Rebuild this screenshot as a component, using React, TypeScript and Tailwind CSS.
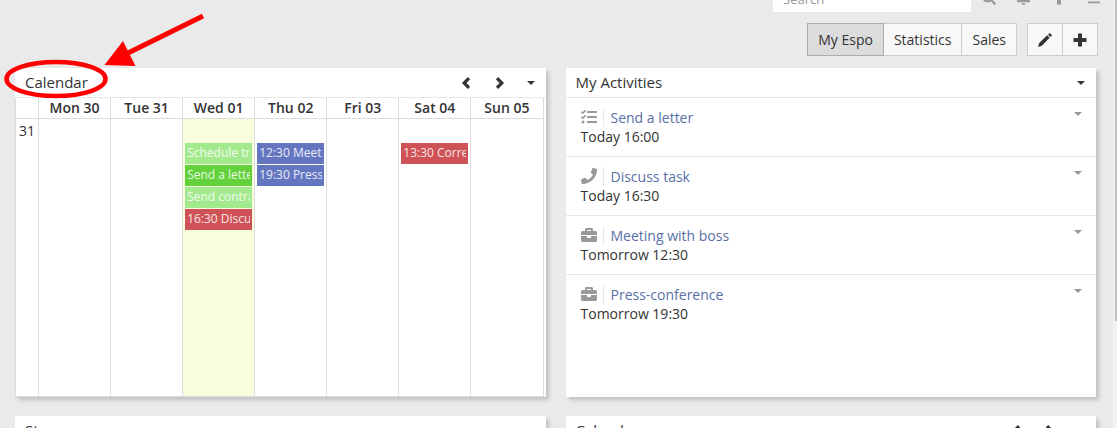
import React from 'react';
import { FaBell, FaBars, FaBriefcase, FaPhone, FaSearch, FaTasks } from 'react-icons/fa';
import type { IconType } from 'react-icons';

type CalendarEvent = { title: string; color: string };
type Day = { label: string; today?: boolean; events: CalendarEvent[] };
type Activity = { icon: IconType; name: string; date: string };

const days: Day[] = [
  { label: 'Mon 30', events: [] },
  { label: 'Tue 31', events: [] },
  {
    label: 'Wed 01',
    today: true,
    events: [
      { title: 'Schedule training', color: 'bg-[#a3e98d]' },
      { title: 'Send a letter', color: 'bg-[#63d13c]' },
      { title: 'Send contract', color: 'bg-[#a3e98d]' },
      { title: '16:30 Discuss task', color: 'bg-[#cf5257]' },
    ],
  },
  {
    label: 'Thu 02',
    events: [
      { title: '12:30 Meeting with boss', color: 'bg-[#6576c1]' },
      { title: '19:30 Press-conference', color: 'bg-[#6576c1]' },
    ],
  },
  { label: 'Fri 03', events: [] },
  { label: 'Sat 04', events: [{ title: '13:30 Correspondence', color: 'bg-[#cf5257]' }] },
  { label: 'Sun 05', events: [] },
];

const activities: Activity[] = [
  { icon: FaTasks, name: 'Send a letter', date: 'Today 16:00' },
  { icon: FaPhone, name: 'Discuss task', date: 'Today 16:30' },
  { icon: FaBriefcase, name: 'Meeting with boss', date: 'Tomorrow 12:30' },
  { icon: FaBriefcase, name: 'Press-conference', date: 'Tomorrow 19:30' },
];

function Caret() {
  return (
    <svg width="8" height="4" viewBox="0 0 8 4" fill="currentColor" aria-hidden="true">
      <path d="M0 0h8L4 4z" />
    </svg>
  );
}

function Chevron({ next = false }: { next?: boolean }) {
  return (
    <svg width="10" height="12" viewBox="0 0 10 12" fill="none" stroke="currentColor" strokeWidth="3.2" aria-hidden="true">
      <path d={next ? 'M2 1.2L6.8 6L2 10.8' : 'M8 1.2L3.2 6L8 10.8'} />
    </svg>
  );
}

function Plus() {
  return (
    <svg width="14" height="14" viewBox="0 0 14 14" fill="currentColor" aria-hidden="true">
      <path d="M5 .5h4V5h4.500v4H9v4.500H5V9H.5V5H5z" />
    </svg>
  );
}

function Pencil() {
  return (
    <svg width="14" height="14" viewBox="0 0 14 14" fill="currentColor" aria-hidden="true">
      <path d="M0 14l1.200-3.900L9.200 2.300l2.400 2.400L3.900 12.800zM10 1.500l1-1q.6-.6 1.200 0l1.300 1.300q.6.600 0 1.200l-1.100 1z" />
    </svg>
  );
}

function Panel({ title, pager = false, children }: { title: string; pager?: boolean; children?: React.ReactNode }) {
  return (
    <section className="flex min-w-0 flex-col bg-white shadow-[3px_3px_4px_rgba(0,0,0,0.18)]">
      <header className="flex h-[30px] shrink-0 items-center border-b border-[#e8e8e8] pr-[11px] pl-[10px]">
        <h2 className="flex-1 text-[15px]">{title}</h2>
        {pager && (
          <div className="mr-2.5 flex">
            <button type="button" aria-label="Previous" className="flex w-[34px] justify-center">
              <Chevron />
            </button>
            <button type="button" aria-label="Next" className="flex w-[34px] justify-center">
              <Chevron next />
            </button>
          </div>
        )}
        <button type="button" aria-label={`${title} menu`} className="flex">
          <Caret />
        </button>
      </header>
      {children}
    </section>
  );
}

function WeekTable() {
  return (
    <div className="pr-0.5">
      <table className="h-[299px] w-full table-fixed border-collapse border border-t-0 border-[#ddd]">
        <thead>
          <tr className="h-5">
            <th className="w-[23px] border border-t-0 border-[#ddd] p-0" aria-label="Week" />
            {days.map((day) => (
              <th key={day.label} className="border border-t-0 border-[#ddd] p-0 text-sm leading-[18px] font-semibold">
                {day.label}
              </th>
            ))}
          </tr>
        </thead>
        <tbody>
          <tr className="align-top">
            <td className="border border-[#ddd] p-0 pt-0.5 text-center text-sm leading-5">31</td>
            {days.map((day) => (
              <td
                key={day.label}
                className={day.today ? 'border border-[#ddd] bg-[#f8fddd] p-0' : 'border border-[#ddd] p-0'}
              >
                <div className="mt-6 flex flex-col gap-px px-0.5">
                  {day.events.map((event) => (
                    <div key={event.title} className={`h-[21px] px-0.5 text-xs leading-[19px] text-white/85 ${event.color}`}>
                      <div className="overflow-hidden whitespace-nowrap">{event.title}</div>
                    </div>
                  ))}
                </div>
              </td>
            ))}
          </tr>
        </tbody>
      </table>
    </div>
  );
}

function ActivityList() {
  return (
    <ul className="flex flex-col">
      {activities.map(({ icon: Icon, name, date }) => (
        <li
          key={name}
          className="flex h-[59px] items-start justify-between border-b border-[#e8e8e8] pt-[10px] pr-[14px] pl-[15px] last:border-b-0"
        >
          <div className="text-sm leading-[19px]">
            <div className="flex items-start">
              <Icon size={16} className="mt-px text-[#999]" aria-hidden="true" />
              <span className="ml-1.5 h-[19px] border-l border-[#e8e8e8] pl-[7px]">
                <a href="#" className="text-[#5a6fa5]">
                  {name}
                </a>
              </span>
            </div>
            <div>{date}</div>
          </div>
          <button type="button" aria-label={`${name} actions`} className="mt-1 flex text-[#999]">
            <Caret />
          </button>
        </li>
      ))}
    </ul>
  );
}

function Annotation() {
  return (
    <svg className="pointer-events-none absolute top-0 left-0" width="220" height="110" viewBox="0 0 220 110" aria-hidden="true">
      <ellipse cx="56" cy="79" rx="49.5" ry="17" fill="none" stroke="#f00" strokeWidth="4.5" />
      <path d="M203 16L126 54" stroke="#f00" strokeWidth="5" />
      <path d="M104.5 65L123 41L135.5 66z" fill="#f00" />
    </svg>
  );
}

const tab = 'border px-2.5 text-sm';
const navButton = 'flex w-[35px] justify-center';

export default function App() {
  return (
    <div className="relative flex h-screen overflow-hidden bg-[#eaeaea] font-['Open_Sans',sans-serif] text-[#333]">
      <div className="min-w-0 flex-1 pr-[17px] pl-[15px]">
        <nav className="-mr-[17px] flex h-3 items-end justify-end text-[#999]">
          <input
            type="text"
            aria-label="Search"
            placeholder="Search"
            className="h-[26px] w-[198px] shrink-0 bg-white px-2.5 text-[13px] placeholder:text-[#999]"
          />
          <div className="mr-0.5 mb-[7px] flex items-end">
            <button type="button" aria-label="Find" className={navButton}><FaSearch size={14} /></button>
            <button type="button" aria-label="Notifications" className={navButton}><FaBell size={15} /></button>
            <button type="button" aria-label="Create" className={navButton}><Plus /></button>
            <button type="button" aria-label="Menu" className={navButton}><FaBars size={14} /></button>
          </div>
        </nav>

        <div className="mt-[11px] -mr-0.5 flex h-[33px] justify-end gap-2.5">
          <div className="flex">
            <button type="button" className={`${tab} border-[#adadad] bg-[#dcdcdc]`}>My Espo</button>
            <button type="button" className={`${tab} border-l-0 border-[#ccc] bg-[#f8f8f8]`}>Statistics</button>
            <button type="button" className={`${tab} border-l-0 border-[#ccc] bg-[#f8f8f8]`}>Sales</button>
          </div>
          <div className="flex">
            <button type="button" aria-label="Edit dashboard" className={`${tab} border-[#ccc] bg-[#f8f8f8]`}>
              <Pencil />
            </button>
            <button type="button" aria-label="Add dashlet" className={`${tab} border-l-0 border-[#ccc] bg-[#f8f8f8]`}>
              <Plus />
            </button>
          </div>
        </div>

        <main className="mt-3 grid grid-cols-2 gap-x-5 gap-y-[19px]">
          <Panel title="Calendar" pager>
            <WeekTable />
          </Panel>
          <Panel title="My Activities">
            <ActivityList />
          </Panel>
          <Panel title="Stream" />
          <Panel title="Calendar" pager />
        </main>
      </div>

      <div className="w-1 shrink-0 bg-[#f1f1f1] pl-0.5" aria-hidden="true">
        <div className="h-3/4 bg-[#c1c1c1]" />
      </div>
      <Annotation />
    </div>
  );
}
